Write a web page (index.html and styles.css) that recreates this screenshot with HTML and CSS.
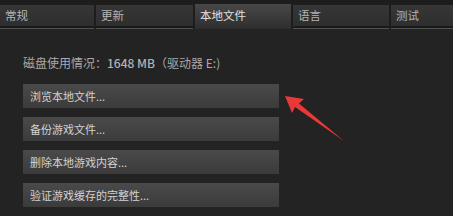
FILE: index.html
```html
<!DOCTYPE html>
<html lang="zh-CN">
<head>
<meta charset="utf-8">
<link rel="stylesheet" href="styles.css">
</head>
<body>
<div class="window">
  <div class="tabs">
    <div class="tab t1">常规</div>
    <div class="tab t2">更新</div>
    <div class="tab active t3">本地文件</div>
    <div class="tab t4">语言</div>
    <div class="tab t5">测试</div>
  </div>
  <div class="content">
    <div class="usage">磁盘使用情况：<span class="num">1648 MB</span>（驱动器 E:)</div>
    <div class="btn">浏览本地文件...</div>
    <div class="btn">备份游戏文件...</div>
    <div class="btn">删除本地游戏内容...</div>
    <div class="btn">验证游戏缓存的完整性...</div>
  </div>
  <svg class="arrow" width="453" height="216" viewBox="0 0 453 216">
    <polygon points="285,96 304,99 299,103.5 344,141 295,107 292,113" fill="#ea3838"/>
  </svg>
</div>
</body>
</html>
```
FILE: styles.css
```css
html, body {
  margin: 0;
  padding: 0;
  background: #232323;
}
.window {
  position: relative;
  width: 453px;
  height: 216px;
  overflow: hidden;
  font-family: "Noto Sans CJK SC", "Noto Sans", sans-serif;
  font-size: 12px;
  background: #232323;
}
.tabs {
  display: flex;
  align-items: flex-start;
  gap: 2px;
  height: 29px;
  background: #1d1d1d;
}
.tab {
  box-sizing: border-box;
  margin-top: 5px;
  height: 23px;
  line-height: 20px;
  padding-left: 5px;
  font-size: 11.5px;
  background: linear-gradient(#363636, #2e2e2e);
  border-bottom: 2px solid #1a1a1a;
  box-shadow: 0 1px 0 #525252;
  color: #b4b4b4;
}
.t1 { width: 94px; }
.t2 { width: 97px; }
.t3 { width: 96px; }
.t4 { width: 96px; }
.t5 { flex: 1; }
.tab.active {
  margin-top: 4px;
  height: 25px;
  line-height: 22px;
  border-bottom: none;
  box-shadow: none;
  background: linear-gradient(#484848, #2e2e2e);
  color: #e2e2e2;
}
.content {
  padding: 26px 0 0 23px;
}
.usage {
  line-height: 16px;
  color: #a9a9a9;
  margin-bottom: 13px;
}
.num {
  font-weight: 500;
  color: #b2b2b2;
}
.btn {
  box-sizing: border-box;
  width: 256px;
  height: 24px;
  line-height: 24px;
  padding-left: 7px;
  margin-bottom: 9px;
  font-size: 11px;
  background: linear-gradient(#4a4a4a, #3b3b3b);
  color: #d2d2d2;
}
.arrow {
  position: absolute;
  left: 0;
  top: 0;
}
```
